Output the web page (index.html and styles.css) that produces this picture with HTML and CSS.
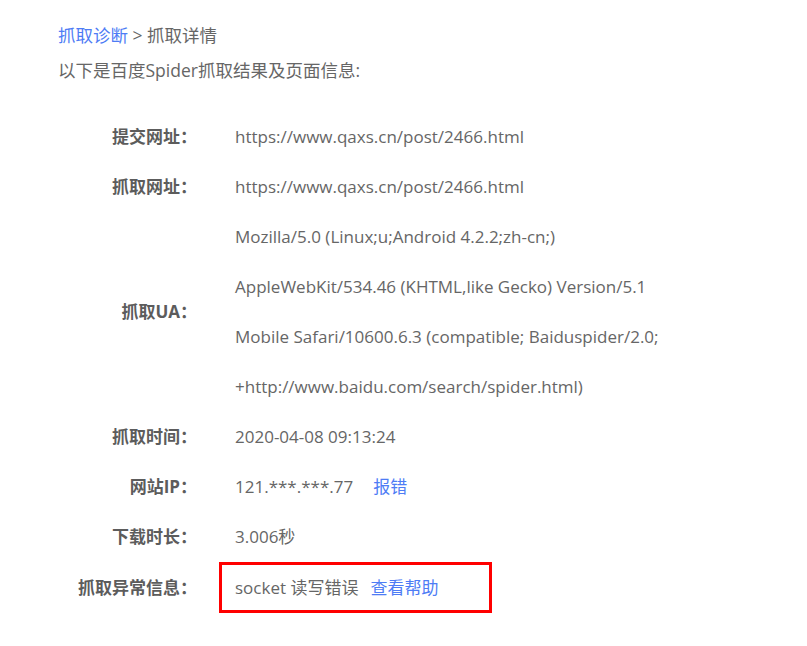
FILE: index.html
```html
<!DOCTYPE html>
<html lang="zh-CN">
<head>
<meta charset="utf-8">
<title>抓取详情</title>
<link rel="stylesheet" href="styles.css">
</head>
<body>
<div class="page">
  <div class="crumb"><a class="link">抓取诊断</a> &gt; 抓取详情</div>
  <div class="intro">以下是百度Spider抓取结果及页面信息:</div>
  <div class="table">
    <div class="label">提交网址：</div>
    <div class="value">https://www.qaxs.cn/post/2466.html</div>

    <div class="label">抓取网址：</div>
    <div class="value">https://www.qaxs.cn/post/2466.html</div>

    <div class="label">抓取UA：</div>
    <div class="value multi">
      <div>Mozilla/5.0 (Linux;u;Android 4.2.2;zh-cn;)</div>
      <div>AppleWebKit/534.46 (KHTML,like Gecko) Version/5.1</div>
      <div>Mobile Safari/10600.6.3 (compatible; Baiduspider/2.0;</div>
      <div>+http://www.baidu.com/search/spider.html)</div>
    </div>

    <div class="label">抓取时间：</div>
    <div class="value">2020-04-08 09:13:24</div>

    <div class="label">网站IP：</div>
    <div class="value">121.***.***.77<a class="link report">报错</a></div>

    <div class="label">下载时长：</div>
    <div class="value">3.006秒</div>

    <div class="label">抓取异常信息：</div>
    <div class="value"><span class="highlight">socket 读写错误<a class="link help">查看帮助</a></span></div>
  </div>
</div>
</body>
</html>
```
FILE: styles.css
```css
html, body {
  margin: 0;
  padding: 0;
  background: #fff;
}
body {
  font-family: "Open Sans", "Noto Sans CJK SC", sans-serif;
  font-size: 17.5px;
  color: #666;
}
.page {
  padding: 18px 0 0 58px;
}
.crumb {
  line-height: 34px;
  color: #666;
}
.intro {
  line-height: 36px;
  color: #666;
}
.link {
  color: #4e7cf5;
  text-decoration: none;
}
.table {
  margin-top: 24px;
  display: grid;
  grid-template-columns: 139px 1fr;
  column-gap: 38px;
  font-size: 17px;
}
.label {
  font-weight: bold;
  line-height: 50px;
  display: flex;
  align-items: center;
  justify-content: flex-end;
  color: #5c5c5c;
}
.value {
  line-height: 50px;
  color: #666;
}
.report {
  margin-left: 20px;
}
.help {
  margin-left: 12px;
}
.highlight {
  display: inline-block;
  margin-left: -16px;
  padding: 0 51px 0 13px;
  border: 3px solid #f00;
  line-height: 45px;
}
```
